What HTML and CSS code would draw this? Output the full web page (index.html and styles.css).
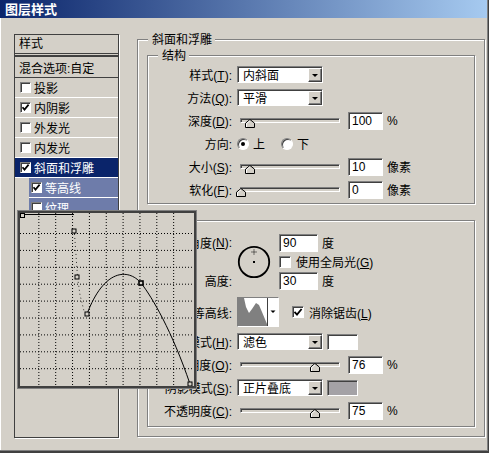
FILE: index.html
```html
<!DOCTYPE html>
<html>
  <head>
    <meta charset="utf-8">
    <link rel="stylesheet" href="styles.css">
  </head>
  <body>
    <div class="window">
      <div class="titlebar">图层样式</div>

      <div class="dialog">
        <!-- effects list -->
        <div class="styles-list">
          <div class="list-head">样式</div>
          <div class="list-row blend">混合选项:自定</div>
          <div class="list-row"><span class="cb"></span>投影</div>
          <div class="list-row"><span class="cb"><svg width="9" height="9"><path d="M1.5 4.2 L3.5 6.6 L7.6 1.6" fill="none" stroke="#000" stroke-width="1.7"/></svg></span>内阴影</div>
          <div class="list-row"><span class="cb"></span>外发光</div>
          <div class="list-row"><span class="cb"></span>内发光</div>
          <div class="list-row selected"><span class="cb"><svg width="9" height="9"><path d="M1.5 4.2 L3.5 6.6 L7.6 1.6" fill="none" stroke="#000" stroke-width="1.7"/></svg></span>斜面和浮雕</div>
          <div class="list-row sub"><span class="cb"><svg width="9" height="9"><path d="M1.5 4.2 L3.5 6.6 L7.6 1.6" fill="none" stroke="#000" stroke-width="1.7"/></svg></span>等高线</div>
          <div class="list-row sub"><span class="cb"></span>纹理</div>
        </div>

        <div class="group outer">
          <div class="group-title">斜面和浮雕</div>

          <!-- 结构 -->
          <div class="group structure">
            <div class="group-title">结构</div>
            <div class="row">
              <div class="lbl">样式(<u>T</u>):</div>
              <div class="select"><span>内斜面</span><span class="drop"></span></div>
            </div>
            <div class="row">
              <div class="lbl">方法(<u>Q</u>):</div>
              <div class="select"><span>平滑</span><span class="drop"></span></div>
            </div>
            <div class="row">
              <div class="lbl">深度(<u>D</u>):</div>
              <div class="slider"><span class="thumb" style="left: 9%"><svg width="10" height="9"><polygon points="0.5,8.5 0.5,4.2 5,0.5 9.5,4.2 9.5,8.5" fill="#d4d0c8" stroke="#000"/><polyline points="1.5,8 1.5,4.6 5,1.7" fill="none" stroke="#fff"/></svg></span></div>
              <span class="num">100</span><span class="unit">%</span>
            </div>
            <div class="row">
              <div class="lbl">方向:</div>
              <span class="radio on"></span><span class="radio-text">上</span>
              <span class="radio"></span><span class="radio-text">下</span>
            </div>
            <div class="row">
              <div class="lbl">大小(<u>S</u>):</div>
              <div class="slider"><span class="thumb" style="left: 9%"><svg width="10" height="9"><polygon points="0.5,8.5 0.5,4.2 5,0.5 9.5,4.2 9.5,8.5" fill="#d4d0c8" stroke="#000"/><polyline points="1.5,8 1.5,4.6 5,1.7" fill="none" stroke="#fff"/></svg></span></div>
              <span class="num">10</span><span class="unit">像素</span>
            </div>
            <div class="row">
              <div class="lbl">软化(<u>F</u>):</div>
              <div class="slider"><span class="thumb" style="left: 0%"><svg width="10" height="9"><polygon points="0.5,8.5 0.5,4.2 5,0.5 9.5,4.2 9.5,8.5" fill="#d4d0c8" stroke="#000"/><polyline points="1.5,8 1.5,4.6 5,1.7" fill="none" stroke="#fff"/></svg></span></div>
              <span class="num">0</span><span class="unit">像素</span>
            </div>
          </div>

          <!-- 阴影 -->
          <div class="group shading">
            <div class="group-title">阴影</div>
            <div class="angle-block">
              <div class="lbl ang-lbl">角度(<u>N</u>):</div>
              <div class="dial">
                <svg width="34" height="34">
                  <circle cx="17" cy="17" r="15.2" fill="none" stroke="#000" stroke-width="1.8"/>
                  <rect x="16" y="16" width="2" height="2" fill="#000"/>
                  <path d="M17 4.5 V9.5 M14.5 7 H19.5" stroke="#000" stroke-width="1" stroke-dasharray="1 1"/>
                </svg>
              </div>
              <div class="cell c1"><span class="num wide">90</span><span class="unit">度</span></div>
              <div class="cell c2"><span class="cb big"></span><span>使用全局光(<u>G</u>)</span></div>
              <div class="lbl alt-lbl">高度:</div>
              <div class="cell c3"><span class="num wide">30</span><span class="unit">度</span></div>
            </div>

            <div class="row contour-row">
              <div class="lbl">光泽等高线:</div>
              <div class="contour-box">
                <svg width="40" height="28">
                  <rect width="40" height="28" fill="#fff"/>
                  <path d="M0 0 H6 L8 9 L11 15 L14 11 L18 5 L21 7 L24 14 L29 26 V28 H0 Z" fill="#808080"/>
                  <line x1="29.5" y1="0" x2="29.5" y2="28" stroke="#404040"/>
                  <polygon points="32.5,12.5 37.5,12.5 35,15" fill="#000"/>
                </svg>
              </div>
              <span class="cb big gap"><svg width="10" height="10"><path d="M1.5 4.8 L4 7.6 L8.6 2" fill="none" stroke="#000" stroke-width="1.8"/></svg></span>
              <span>消除锯齿(<u>L</u>)</span>
            </div>

            <div class="row first-mode">
              <div class="lbl">高光模式(<u>H</u>):</div>
              <div class="select"><span>滤色</span><span class="drop"></span></div>
              <span class="swatch"></span>
            </div>
            <div class="row">
              <div class="lbl">不透明度(<u>O</u>):</div>
              <div class="slider"><span class="thumb" style="left: 76%"><svg width="10" height="9"><polygon points="0.5,8.5 0.5,4.2 5,0.5 9.5,4.2 9.5,8.5" fill="#d4d0c8" stroke="#000"/><polyline points="1.5,8 1.5,4.6 5,1.7" fill="none" stroke="#fff"/></svg></span></div>
              <span class="num">76</span><span class="unit">%</span>
            </div>
            <div class="row">
              <div class="lbl">阴影模式(<u>S</u>):</div>
              <div class="select"><span>正片叠底</span><span class="drop"></span></div>
              <span class="swatch gray"></span>
            </div>
            <div class="row">
              <div class="lbl">不透明度(<u>C</u>):</div>
              <div class="slider"><span class="thumb" style="left: 75%"><svg width="10" height="9"><polygon points="0.5,8.5 0.5,4.2 5,0.5 9.5,4.2 9.5,8.5" fill="#d4d0c8" stroke="#000"/><polyline points="1.5,8 1.5,4.6 5,1.7" fill="none" stroke="#fff"/></svg></span></div>
              <span class="num">75</span><span class="unit">%</span>
            </div>
          </div>
        </div>
      </div>

      <!-- contour picker popup -->
      <div class="contour-popup">
        <svg width="174" height="173">
          <g stroke="#000" stroke-width="1" stroke-dasharray="1 2">
            <path d="M18.85 0 V173 M35.7 0 V173 M52.55 0 V173 M69.4 0 V173 M86.25 0 V173 M103.1 0 V173 M119.95 0 V173 M136.8 0 V173 M153.65 0 V173"/>
            <path d="M0 20.5 H174 M0 37.4 H174 M0 54.3 H174 M0 71.2 H174 M0 88.1 H174 M0 105 H174 M0 121.9 H174 M0 138.8 H174 M0 155.7 H174"/>
          </g>
          <line x1="2" y1="1.5" x2="54" y2="1.5" stroke="#000"/>
          <path d="M54.5 21 L56 42 L57.5 64 L60 82 L64 98" fill="none" stroke="#000" stroke-width="0.8" stroke-dasharray="1 3"/>
          <path d="M67 101 C 84 56, 108 55, 121 70 C 132 84, 152 118, 170 171" fill="none" stroke="#000" stroke-width="1"/>
          <g fill="#d4d0c8" stroke="#000" stroke-width="1">
            <rect x="0.5" y="0.5" width="4" height="4"/>
            <rect x="52" y="16" width="4" height="4"/>
            <rect x="55" y="62" width="4" height="4"/>
            <rect x="65" y="99" width="4" height="4"/>
            <rect x="119" y="68" width="4" height="4" stroke-width="1.6"/>
            <rect x="168" y="169" width="4" height="4"/>
          </g>
        </svg>
      </div>
    </div>
  </body>
</html>
```

FILE: styles.css
```css
* {
  box-sizing: border-box;
}

body {
  margin: 0;
  background: #404040;
  font-family: "Liberation Sans", "Noto Sans CJK SC", sans-serif;
  font-size: 12px;
  color: #000;
}

.window {
  position: relative;
  width: 488px;
  height: 451px;
  background: #d4d0c8;
  border-right: 1px solid #808080;
  border-bottom: 1px solid #808080;
  overflow: hidden;
}

.titlebar {
  height: 18px;
  padding-left: 5px;
  background: linear-gradient(to right, #0a246a, #a6caf0);
  color: #fff;
  font-family: "Noto Sans CJK SC", sans-serif;
  font-weight: bold;
  font-size: 13px;
  line-height: 18px;
}

.dialog {
  display: flex;
  align-items: flex-start;
  height: 432px;
  padding: 16px 0 0 13px;
  border-left: 1px solid #fff;
}

u {
  text-decoration: underline;
}

/* effects list */
.styles-list {
  flex: none;
  width: 105px;
  height: 404px;
  border: 1px solid #404040;
  box-shadow: 1px 1px 0 #fff;
}

.list-head {
  height: 19px;
  padding-left: 4px;
  line-height: 18px;
  border-bottom: 1px solid #404040;
}

.list-row {
  display: flex;
  align-items: center;
  height: 20px;
  padding-left: 5px;
  border-bottom: 1px solid #fff;
  white-space: nowrap;
}

.list-row.blend {
  height: 23px;
  margin-top: 1px;
  padding-left: 4px;
  border-top: 2px solid #404040;
  border-bottom: 1px solid #404040;
}

.list-row.selected {
  background: #0a246a;
  color: #fff;
}

.list-row.sub {
  margin-left: 14px;
  padding-left: 2px;
  background: #6e7caa;
  color: #fff;
}

.cb {
  flex: none;
  display: flex;
  align-items: center;
  justify-content: center;
  width: 11px;
  height: 11px;
  margin-right: 3px;
  background: #fff;
  border: 1px solid;
  border-color: #808080 #fff #fff #808080;
  box-shadow: inset 1px 1px 0 #404040;
}

.cb.big {
  width: 12px;
  height: 12px;
  margin-right: 5px;
}

.cb.gap {
  margin-left: 13px;
}

/* group boxes */
.group {
  border: 1px solid #808080;
  box-shadow: 1px 1px 0 #fff, inset 1px 1px 0 #fff;
}

.group-title {
  width: max-content;
  margin: -7px 0 0 10px;
  padding: 0 3px 0 4px;
  line-height: 14px;
  background: #d4d0c8;
}

.outer {
  flex: none;
  width: 348px;
  height: 398px;
  margin: 5px 0 0 18px;
}

.structure {
  width: 328px;
  height: 149px;
  margin: 8px 0 0 9px;
}

.shading {
  width: 328px;
  height: 207px;
  margin: 16px 0 0 9px;
}

.row {
  display: flex;
  align-items: center;
  height: 23px;
  white-space: nowrap;
}

.lbl {
  flex: none;
  width: 89px;
  padding-right: 5px;
  text-align: right;
  white-space: nowrap;
}

/* controls */
.select {
  display: flex;
  align-items: center;
  justify-content: space-between;
  width: 86px;
  height: 17px;
  padding-left: 5px;
  background: #fff;
  border: 1px solid;
  border-color: #808080 #fff #fff #808080;
  box-shadow: inset 1px 1px 0 #404040;
}

.drop {
  display: flex;
  align-items: center;
  justify-content: center;
  width: 14px;
  height: 14px;
  margin-top: 1px;
  background: #d4d0c8;
  border: 1px solid;
  border-color: #fff #404040 #404040 #fff;
  box-shadow: inset -1px -1px 0 #808080;
}

.drop::after {
  content: "";
  border-left: 3px solid transparent;
  border-right: 3px solid transparent;
  border-top: 3px solid #000;
}

.slider {
  position: relative;
  width: 100px;
  height: 5px;
  margin-left: 3px;
  margin-top: -1px;
  background: #d4d0c8;
  border: 1px solid;
  border-color: #808080 #fff #fff #808080;
  box-shadow: inset 1px 1px 0 #404040;
}

.thumb {
  position: absolute;
  top: 0;
  margin-left: -5px;
  line-height: 0;
}

.num {
  width: 35px;
  height: 18px;
  margin-left: 8px;
  padding-left: 3px;
  line-height: 16px;
  background: #fff;
  border: 1px solid;
  border-color: #808080 #fff #fff #808080;
  box-shadow: inset 1px 1px 0 #404040;
}

.num.wide {
  width: 39px;
  margin-left: 0;
}

.unit {
  margin-left: 4px;
}

.radio {
  display: flex;
  align-items: center;
  justify-content: center;
  width: 12px;
  height: 12px;
  border-radius: 50%;
  background: #fff;
  border: 1px solid;
  border-color: #808080 #fff #fff #808080;
  box-shadow: inset 1px 1px 0 #404040;
}

.radio.on::after {
  content: "";
  width: 4px;
  height: 4px;
  border-radius: 50%;
  background: #000;
}

.radio-text {
  margin: 0 16px 0 4px;
}

.swatch {
  width: 31px;
  height: 16px;
  margin-left: 4px;
  background: #fff;
  border: 1px solid;
  border-color: #808080 #fff #fff #808080;
  box-shadow: inset 1px 1px 0 #404040;
}

.swatch.gray {
  background: #a4a2a6;
}

/* angle block */
.angle-block {
  display: grid;
  grid-template-columns: 89px 42px auto;
  grid-template-rows: repeat(3, 19px);
  margin-top: 5px;
  white-space: nowrap;
}

.angle-block .lbl,
.angle-block .cell {
  display: flex;
  align-items: center;
}

.angle-block .lbl {
  justify-content: flex-end;
}

.ang-lbl { grid-column: 1; grid-row: 1; }
.alt-lbl { grid-column: 1; grid-row: 3; }
.c1 { grid-column: 3; grid-row: 1; }
.c2 { grid-column: 3; grid-row: 2; }
.c3 { grid-column: 3; grid-row: 3; }

.dial {
  grid-column: 2;
  grid-row: 1 / span 3;
  align-self: center;
  line-height: 0;
}

.contour-row {
  height: 30px;
  margin-top: 7px;
}

.contour-box {
  width: 42px;
  height: 30px;
  line-height: 0;
  border: 1px solid;
  border-color: #808080 #fff #fff #808080;
}

.first-mode {
  margin-top: 3px;
}

/* contour picker */
.contour-popup {
  position: absolute;
  left: 18px;
  top: 211px;
  width: 178px;
  height: 177px;
  line-height: 0;
  background: #d4d0c8;
  border: 2px solid #404040;
  box-shadow: 0 0 0 1px #808080;
}
```
